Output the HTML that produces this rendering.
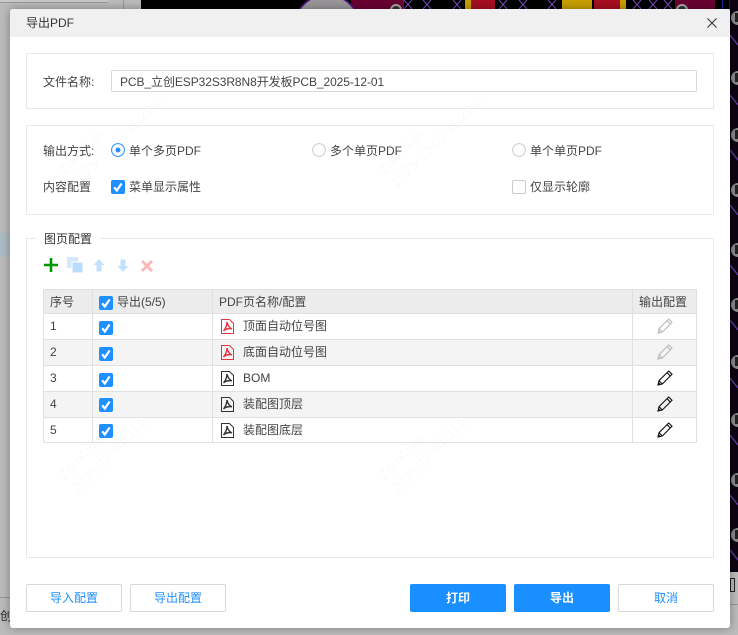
<!DOCTYPE html>
<html><head><meta charset="utf-8">
<style>
html,body{margin:0;padding:0;width:738px;height:635px;overflow:hidden;background:#b9b9b9}
*{box-sizing:border-box}
body{font:12px/16px "Liberation Sans","Noto Sans CJK SC",sans-serif;color:#444;position:relative}
.a{position:absolute}
.t{position:absolute;white-space:nowrap;color:#444;line-height:16px}
.box{position:absolute;border:1px solid #e8e8e8;background:transparent}
.cb{position:absolute;width:14px;height:14px;background:#1e90ff;border-radius:2px}
.cb svg{display:block}
.btn{position:absolute;top:584px;width:96px;height:28px;border:1px solid #d9d9d9;border-radius:2px;text-align:center;line-height:27px;color:#1e90ff;background:#fff}
.btn.p{background:#1a8fff;border-color:#1a8fff;color:#fff;font-weight:bold}
.wm{position:absolute;color:rgba(0,0,0,.022);transform:rotate(-45deg);transform-origin:0 100%;font-size:14px;line-height:18px;white-space:nowrap}
.row{position:absolute;left:43px;width:654px}
</style></head>
<body>
<!-- backdrop -->
<div class="a" style="left:0;top:0;width:738px;height:635px;background:#bcbcbc"></div>
<div class="a" style="left:0;top:0;width:108px;height:3px;background:#c9c9c9;border-bottom:1px solid #999"></div>
<div class="a" style="left:123px;top:0;width:1px;height:9px;background:#9a9a9a"></div>
<div class="a" style="left:141px;top:0;width:597px;height:9px;background:#000"></div>
<svg class="a" style="left:141px;top:0" width="597" height="9" viewBox="0 0 597 9">
<rect x="210" y="0" width="52" height="9" fill="#6a0232"/>
<circle cx="186" cy="28" r="33" fill="#9c989c" stroke="#5a1a8a" stroke-width="1.5"/>
<rect x="262" y="0" width="1" height="9" fill="#2222aa"/>
<rect x="324" y="0" width="6" height="9" fill="#c9a000"/>
<rect x="330" y="0" width="24" height="9" fill="#a80e22"/>
<rect x="421" y="0" width="30" height="9" fill="#c9a000"/>
<rect x="453" y="0" width="26" height="9" fill="#a80e22"/>
<rect x="479" y="0" width="6" height="9" fill="#c9a000"/>
<rect x="534" y="0" width="40" height="9" fill="#6a0232"/>
<rect x="581" y="0" width="1" height="9" fill="#2222aa"/>
<rect x="588" y="0" width="9" height="9" fill="#3a0a30"/>
<g stroke="#7b4fc0" stroke-width="1" fill="none">
<path d="M263 0l8 9M271 0l-8 9M282 0l8 9M290 0l-8 9M312 0l8 9M320 0l-8 9M358 0l8 9M366 0l-8 9M378 0l8 9M386 0l-8 9M407 0l8 9M415 0l-8 9M492 0l8 9M500 0l-8 9M508 0l8 9M516 0l-8 9M523 0l8 9M531 0l-8 9"/>
</g>
<circle cx="255" cy="10" r="5" fill="#333" stroke="#aaa" stroke-width="2"/>
<circle cx="541" cy="10" r="5" fill="#333" stroke="#aaa" stroke-width="2"/>
</svg>
<svg class="a" style="left:730px;top:0" width="8" height="635" viewBox="0 0 8 635">
<rect width="8" height="572" fill="#0c0412"/>
<g stroke="#6a3fb0" stroke-width="1.200" fill="none">
<path d="M0 35l8 10M0 95l8 10M0 150l8 10M0 205l8 10M0 265l8 10M0 320l8 10M0 378l8 10M0 435l8 10M0 495l8 10M0 550l8 10"/>
</g>
<g fill="#8a8a8a"><circle cx="8" cy="18" r="7"/><circle cx="8" cy="78" r="7"/><circle cx="8" cy="135" r="7"/><circle cx="8" cy="190" r="7"/><circle cx="8" cy="250" r="7"/><circle cx="8" cy="305" r="7"/><circle cx="8" cy="362" r="7"/><circle cx="8" cy="420" r="7"/><circle cx="8" cy="480" r="7"/><circle cx="8" cy="535" r="7"/></g>
<g fill="#222"><rect x="5" y="13" width="3" height="9"/><rect x="5" y="73" width="3" height="9"/><rect x="5" y="130" width="3" height="9"/><rect x="5" y="185" width="3" height="9"/><rect x="5" y="245" width="3" height="9"/><rect x="5" y="300" width="3" height="9"/><rect x="5" y="357" width="3" height="9"/><rect x="5" y="415" width="3" height="9"/><rect x="5" y="475" width="3" height="9"/><rect x="5" y="530" width="3" height="9"/></g>
<rect x="0.500" y="578.500" width="4" height="13" fill="none" stroke="#222"/>
<rect x="0" y="604" width="8" height="1" fill="#9a9a9a"/>
</svg>
<div class="a" style="left:0;top:233px;width:10px;height:24px;background:#aebcc4"></div>
<div class="a" style="left:0;top:597px;width:10px;height:1px;background:#999"></div>
<div class="t" style="left:0;top:608px;color:#222;width:10px;overflow:hidden">创</div>

<!-- dialog -->
<div class="a" style="left:10px;top:9px;width:720px;height:619px;background:#fff;border-radius:3px;box-shadow:0 0 10px rgba(0,0,0,.35);overflow:hidden">
  <div class="a" style="left:0;top:0;width:720px;height:28px;background:#f0f0f0"></div>
</div>
<div class="t" style="left:26px;top:15px;color:#333">导出PDF</div>
<svg class="a" style="left:706px;top:17px" width="12" height="12" viewBox="0 0 12 12"><path d="M1.500 1.500l9 9M10.500 1.500l-9 9" stroke="#333" stroke-width="1.100" fill="none"/></svg>

<!-- watermarks -->
<div class="wm" style="left:80px;top:155px">ZouYuan<br>2025-12-01 11:29:00</div>
<div class="wm" style="left:400px;top:155px">ZouYuan<br>2025-12-01 11:29:00</div>
<div class="wm" style="left:80px;top:460px">ZouYuan<br>2025-12-01 11:29:00</div>
<div class="wm" style="left:400px;top:460px">ZouYuan<br>2025-12-01 11:29:00</div>

<!-- file name -->
<div class="box" style="left:26px;top:53px;width:688px;height:56px"></div>
<div class="t" style="left:43px;top:74px">文件名称:</div>
<div class="a" style="left:111px;top:70px;width:586px;height:22px;border:1px solid #d9d9d9;border-radius:2px"></div>
<div class="t" style="left:120px;top:74px;letter-spacing:-.08px">PCB_立创ESP32S3R8N8开发板PCB_2025-12-01</div>

<!-- options -->
<div class="box" style="left:26px;top:125px;width:688px;height:90px"></div>
<div class="t" style="left:43px;top:143px">输出方式:</div>
<svg class="a" style="left:111px;top:143px" width="14" height="14" viewBox="0 0 14 14"><circle cx="7" cy="7" r="6.400" fill="#fff" stroke="#1e90ff"/><circle cx="7" cy="7" r="2.500" fill="#1e90ff"/></svg>
<div class="t" style="left:129px;top:143px">单个多页PDF</div>
<svg class="a" style="left:312px;top:143px" width="14" height="14" viewBox="0 0 14 14"><circle cx="7" cy="7" r="6.400" fill="#fff" stroke="#ccc"/></svg>
<div class="t" style="left:330px;top:143px">多个单页PDF</div>
<svg class="a" style="left:512px;top:143px" width="14" height="14" viewBox="0 0 14 14"><circle cx="7" cy="7" r="6.400" fill="#fff" stroke="#ccc"/></svg>
<div class="t" style="left:530px;top:143px">单个单页PDF</div>
<div class="t" style="left:43px;top:179px">内容配置</div>
<div class="cb" style="left:111px;top:180px"><svg width="14" height="14" viewBox="0 0 14 14"><path d="M3.200 7.300l2.600 3.200 4.800-7" stroke="#fff" stroke-width="2.200" fill="none"/></svg></div>
<div class="t" style="left:129px;top:179px">菜单显示属性</div>
<div class="a" style="left:512px;top:180px;width:14px;height:14px;border:1px solid #ccc;border-radius:2px"></div>
<div class="t" style="left:530px;top:179px">仅显示轮廓</div>

<!-- page config -->
<div class="box" style="left:26px;top:238px;width:688px;height:320px"></div>
<div class="t" style="left:36px;top:231px;padding:0 8px;background:#fff;color:#333">图页配置</div>
<svg class="a" style="left:44px;top:258px" width="14" height="14" viewBox="0 0 14 14"><path d="M7 0v14M0 7h14" stroke="#009900" stroke-width="2.600" fill="none"/></svg>
<svg class="a" style="left:67px;top:257px" width="17" height="17" viewBox="0 0 17 17"><rect x="0" y="0" width="11" height="11" fill="#d3e8fd"/><rect x="5" y="5" width="11" height="11" fill="#bcdcfd" stroke="#fff"/></svg>
<svg class="a" style="left:93px;top:259px" width="12" height="13" viewBox="0 0 12 13"><path d="M6 0l5.500 6H8.500v6.500h-5V6H.5z" fill="#c3e0fd"/></svg>
<svg class="a" style="left:117px;top:259px" width="12" height="13" viewBox="0 0 12 13"><path d="M6 13L.5 7h3V.5h5V7h3z" fill="#c3e0fd"/></svg>
<svg class="a" style="left:141px;top:260px" width="12" height="12" viewBox="0 0 12 12"><path d="M1 1l10 10M11 1L1 11" stroke="#fdb5b5" stroke-width="2.800" fill="none"/></svg>

<!-- table -->
<div class="row" style="top:289px;height:25px;background:#ececec"></div>
<div class="row" style="top:340px;height:26px;background:#f4f4f4"></div>
<div class="row" style="top:392px;height:26px;background:#f4f4f4"></div>
<div class="a" style="left:43px;top:289px;width:654px;height:154px;border:1px solid #e0e0e0"></div>
<div class="row" style="top:313px;height:1px;background:#e0e0e0"></div>
<div class="row" style="top:339px;height:1px;background:#e0e0e0"></div>
<div class="row" style="top:365px;height:1px;background:#e0e0e0"></div>
<div class="row" style="top:391px;height:1px;background:#e0e0e0"></div>
<div class="row" style="top:417px;height:1px;background:#e0e0e0"></div>
<div class="a" style="left:92px;top:289px;width:1px;height:154px;background:#e0e0e0"></div>
<div class="a" style="left:212px;top:289px;width:1px;height:154px;background:#e0e0e0"></div>
<div class="a" style="left:632px;top:289px;width:1px;height:154px;background:#e0e0e0"></div>

<div class="t" style="left:50px;top:294px">序号</div>
<div class="cb" style="left:99px;top:296px"><svg width="14" height="14" viewBox="0 0 14 14"><path d="M3.200 7.300l2.600 3.200 4.800-7" stroke="#fff" stroke-width="2.200" fill="none"/></svg></div>
<div class="t" style="left:117px;top:294px">导出(5/5)</div>
<div class="t" style="left:219px;top:294px">PDF页名称/配置</div>
<div class="t" style="left:639px;top:294px">输出配置</div>

<div class="t" style="left:50px;top:318px">1</div>
<div class="t" style="left:50px;top:344px">2</div>
<div class="t" style="left:50px;top:370px">3</div>
<div class="t" style="left:50px;top:396px">4</div>
<div class="t" style="left:50px;top:422px">5</div>

<div class="cb" style="left:99px;top:321px"><svg width="14" height="14" viewBox="0 0 14 14"><path d="M3.200 7.300l2.600 3.200 4.800-7" stroke="#fff" stroke-width="2.200" fill="none"/></svg></div>
<div class="cb" style="left:99px;top:347px"><svg width="14" height="14" viewBox="0 0 14 14"><path d="M3.200 7.300l2.600 3.200 4.800-7" stroke="#fff" stroke-width="2.200" fill="none"/></svg></div>
<div class="cb" style="left:99px;top:373px"><svg width="14" height="14" viewBox="0 0 14 14"><path d="M3.200 7.300l2.600 3.200 4.800-7" stroke="#fff" stroke-width="2.200" fill="none"/></svg></div>
<div class="cb" style="left:99px;top:398px"><svg width="14" height="14" viewBox="0 0 14 14"><path d="M3.200 7.300l2.600 3.200 4.800-7" stroke="#fff" stroke-width="2.200" fill="none"/></svg></div>
<div class="cb" style="left:99px;top:424px"><svg width="14" height="14" viewBox="0 0 14 14"><path d="M3.200 7.300l2.600 3.200 4.800-7" stroke="#fff" stroke-width="2.200" fill="none"/></svg></div>

<svg width="0" height="0" style="position:absolute">
<symbol id="pdf" viewBox="0 0 13 15"><path d="M.5.500h8l4 4v10H.5z" fill="none" stroke="currentColor"/><path d="M6 3c0 3-1.500 6.500-3.500 9M6 3c.5 3 2.500 6 5 7M3 11.500c2-2 5-2 7.500-2" fill="none" stroke="currentColor" stroke-width="1.400"/></symbol>
<symbol id="pen" viewBox="0 0 16 16"><path d="M1 15l1-4.300L11.700 1 15 4.300 5.300 14zM2 10.700L5.300 14M10 2.700l3.300 3.300" fill="none" stroke="currentColor" stroke-width="1.100"/><path d="M1 15l.7-2.800 2.100 2.100z" fill="currentColor"/></symbol>
</svg>

<svg class="a" style="left:221px;top:319px;color:#e8343a" width="13" height="15"><use href="#pdf"/></svg>
<svg class="a" style="left:221px;top:345px;color:#e8343a" width="13" height="15"><use href="#pdf"/></svg>
<svg class="a" style="left:221px;top:371px;color:#333" width="13" height="15"><use href="#pdf"/></svg>
<svg class="a" style="left:221px;top:397px;color:#333" width="13" height="15"><use href="#pdf"/></svg>
<svg class="a" style="left:221px;top:423px;color:#333" width="13" height="15"><use href="#pdf"/></svg>

<div class="t" style="left:243px;top:318px">顶面自动位号图</div>
<div class="t" style="left:243px;top:344px">底面自动位号图</div>
<div class="t" style="left:243px;top:370px">BOM</div>
<div class="t" style="left:243px;top:396px">装配图顶层</div>
<div class="t" style="left:243px;top:422px">装配图底层</div>

<svg class="a" style="left:657px;top:318px;color:#bbb" width="16" height="16"><use href="#pen"/></svg>
<svg class="a" style="left:657px;top:344px;color:#bbb" width="16" height="16"><use href="#pen"/></svg>
<svg class="a" style="left:657px;top:370px;color:#111" width="16" height="16"><use href="#pen"/></svg>
<svg class="a" style="left:657px;top:396px;color:#111" width="16" height="16"><use href="#pen"/></svg>
<svg class="a" style="left:657px;top:422px;color:#111" width="16" height="16"><use href="#pen"/></svg>

<!-- buttons -->
<div class="btn" style="left:26px">导入配置</div>
<div class="btn" style="left:130px">导出配置</div>
<div class="btn p" style="left:410px">打印</div>
<div class="btn p" style="left:514px">导出</div>
<div class="btn" style="left:618px">取消</div>
</body></html>
